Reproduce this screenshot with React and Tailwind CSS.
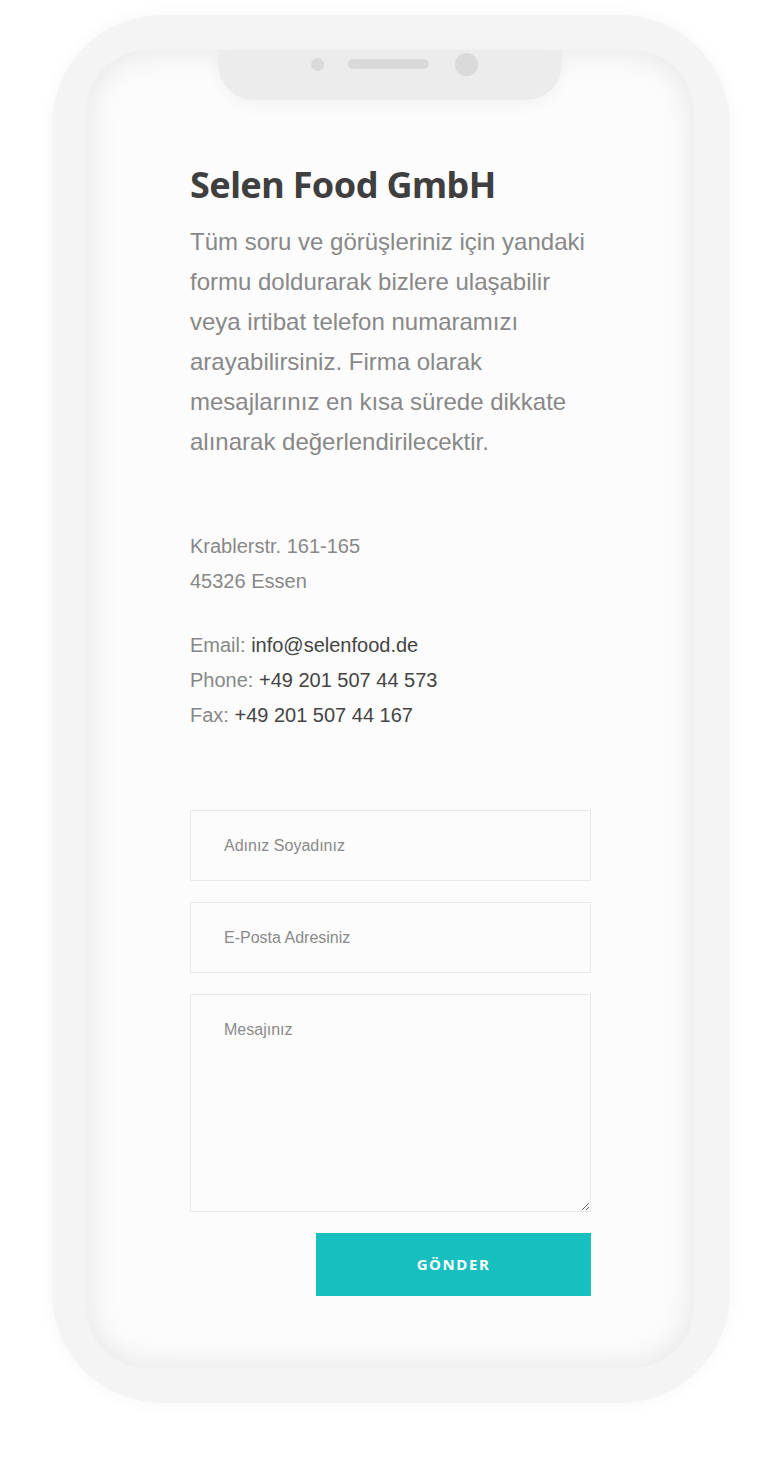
import React from "react";

export default function App() {
  const sans = { fontFamily: '"Liberation Sans", Arial, sans-serif' };
  return (
    <div className="w-[782px] h-[1479px] bg-white pt-[15px]" style={sans}>
      <div className="ml-[52px] w-[678px] h-[1388px] rounded-[110px] bg-[#f4f4f4] pt-[35px] pl-[34px] shadow-[0_0_18px_rgba(0,0,0,0.035)]">
        <div className="relative w-[608px] h-[1318px] rounded-[62px] bg-[#fcfcfc] shadow-[inset_0_0_34px_rgba(0,0,0,0.1)] pl-[104px] pt-[113px]">
          <div className="absolute left-[132px] top-0 w-[344px] h-[50px] rounded-b-[36px] bg-[#ececec] shadow-[0_6px_16px_rgba(0,0,0,0.04)]">
            <div className="flex items-center h-[28px] pl-[93px]">
              <div className="w-[13px] h-[13px] rounded-full bg-[#dadada]" />
              <div className="ml-[24px] w-[81px] h-[10px] rounded-full bg-[#dadada]" />
              <div className="ml-[26px] w-[23px] h-[23px] rounded-full bg-[#dadada]" />
            </div>
          </div>

          <h1
            className="text-[36px] leading-[43px] font-bold text-[#3f3f3f] tracking-[-0.6px]"
            style={{ fontFamily: '"Noto Sans", "Open Sans", sans-serif' }}
          >
            Selen Food GmbH
          </h1>
          <p className="mt-[16px] w-[400px] text-[24px] leading-[40px] text-[#888888]">
            Tüm soru ve görüşleriniz için yandaki formu doldurarak bizlere ulaşabilir veya irtibat telefon numaramızı arayabilirsiniz. Firma olarak mesajlarınız en kısa sürede dikkate alınarak değerlendirilecektir.
          </p>

          <div className="mt-[67px] text-[20px] leading-[35px] text-[#888888]">
            <div>Krablerstr. 161-165</div>
            <div>45326 Essen</div>
          </div>

          <div className="mt-[29px] text-[20px] leading-[35px] text-[#888888]">
            <div>
              Email: <span className="text-[#444444]">info@selenfood.de</span>
            </div>
            <div>
              Phone: <span className="text-[#444444]">+49 201 507 44 573</span>
            </div>
            <div>
              Fax: <span className="text-[#444444]">+49 201 507 44 167</span>
            </div>
          </div>

          <form className="mt-[77px] w-[401px] flex flex-col gap-[21px]">
            <input
              type="text"
              placeholder="Adınız Soyadınız"
              className="h-[71px] w-full border border-[#e8e8e8] bg-[#fcfcfc] pl-[33px] text-[16px] text-[#444] placeholder:text-[#8a8a8a] outline-none"
              style={sans}
            />
            <input
              type="text"
              placeholder="E-Posta Adresiniz"
              className="h-[71px] w-full border border-[#e8e8e8] bg-[#fcfcfc] pl-[33px] text-[16px] text-[#444] placeholder:text-[#8a8a8a] outline-none"
              style={sans}
            />
            <textarea
              placeholder="Mesajınız"
              className="h-[218px] w-full border border-[#e8e8e8] bg-[#fcfcfc] pl-[33px] pt-[24px] text-[16px] leading-[22px] text-[#444] placeholder:text-[#8a8a8a] outline-none block"
              style={sans}
            />
            <div className="flex justify-end">
              <button
                type="button"
                className="w-[275px] h-[63px] bg-[#17bfbf] text-white text-[15px] font-bold tracking-[1.6px]"
                style={{ fontFamily: '"Noto Sans", "Open Sans", sans-serif' }}
              >
                GÖNDER
              </button>
            </div>
          </form>
        </div>
      </div>
    </div>
  );
}
